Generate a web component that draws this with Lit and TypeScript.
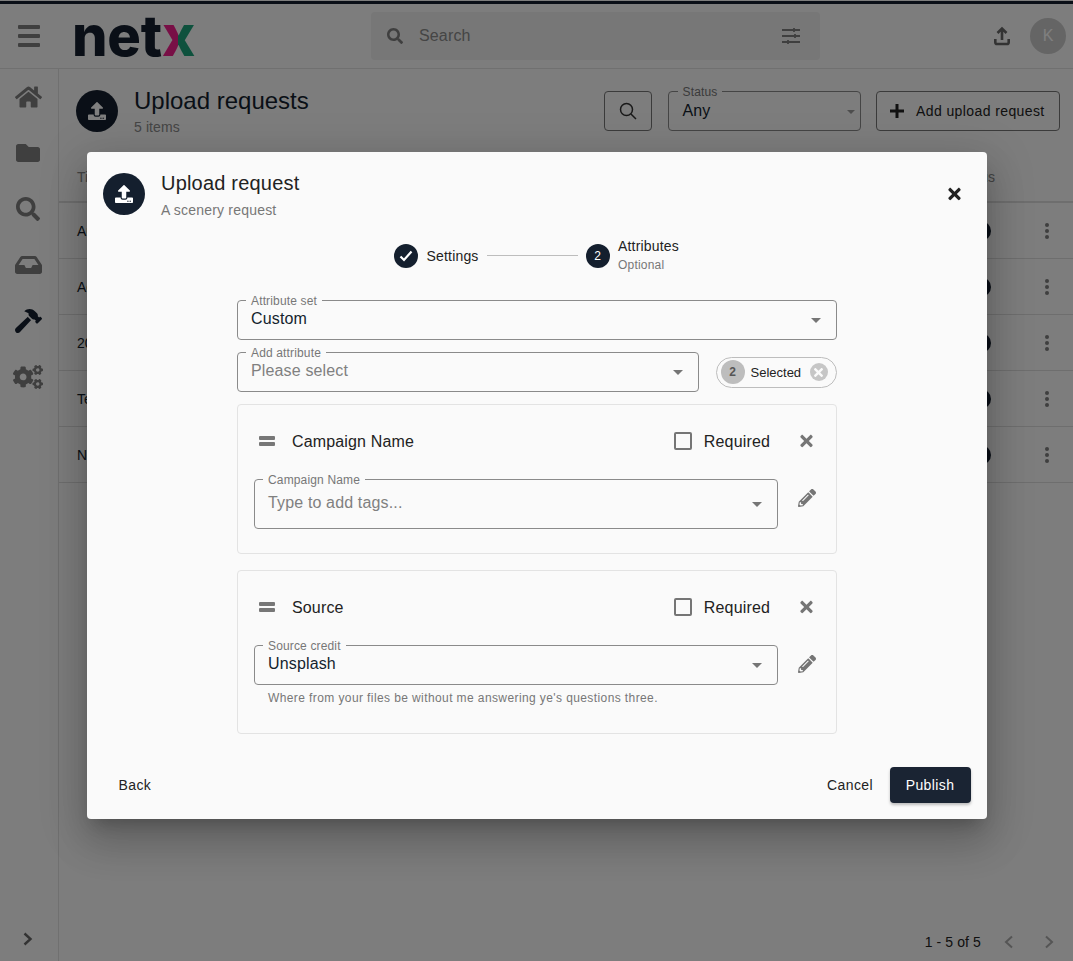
import { LitElement, html, css, svg } from 'lit';
import { customElement } from 'lit/decorators.js';

const UPLOAD = svg`<path d="M296 384h-80c-13.3 0-24-10.7-24-24V192h-87.7c-17.8 0-26.7-21.5-14.1-34.1L242.3 5.7c7.5-7.5 19.8-7.5 27.3 0l152.2 152.2c12.6 12.6 3.7 34.1-14.1 34.1H320v168c0 13.3-10.7 24-24 24zm216-8v112c0 13.3-10.7 24-24 24H24c-13.3 0-24-10.7-24-24V376c0-13.3 10.7-24 24-24h136v8c0 30.9 25.1 56 56 56h80c30.9 0 56-25.1 56-56v-8h136c13.3 0 24 10.7 24 24zm-124 88c0-11-9-20-20-20s-20 9-20 20 9 20 20 20 20-9 20-20zm64 0c0-11-9-20-20-20s-20 9-20 20 9 20 20 20 20-9 20-20z"/>`;
const TIMES = svg`<path d="M242.72 256l100.07-100.07c12.28-12.28 12.28-32.19 0-44.48l-22.24-22.24c-12.28-12.28-32.19-12.28-44.48 0L176 189.28 75.93 89.21c-12.28-12.28-32.19-12.28-44.48 0L9.21 111.45c-12.28 12.28-12.28 32.19 0 44.48L109.28 256 9.21 356.07c-12.28 12.28-12.28 32.19 0 44.48l22.24 22.24c12.28 12.28 32.2 12.28 44.48 0L176 322.72l100.07 100.07c12.28 12.28 32.2 12.28 44.48 0l22.24-22.24c12.28-12.28 12.28-32.19 0-44.48L242.72 256z"/>`;
const PENCIL = svg`<path d="M497.9 142.1l-46.1 46.1c-4.7 4.7-12.3 4.7-17 0l-111-111c-4.7-4.7-4.7-12.3 0-17l46.1-46.1c18.7-18.7 49.1-18.7 67.9 0l60.1 60.1c18.8 18.7 18.8 49.1 0 67.9zM284.2 99.8L21.6 362.4.4 483.9c-2.9 16.4 11.4 30.6 27.8 27.8l121.5-21.3 262.6-262.6c4.7-4.7 4.7-12.3 0-17l-111-111c-4.8-4.7-12.4-4.7-17.1 0zM124.1 339.9c-5.5-5.5-5.5-14.3 0-19.8l154-154c5.5-5.5 14.3-5.5 19.8 0s5.5 14.3 0 19.8l-154 154c-5.5 5.5-14.3 5.5-19.8 0zM88 424h48v36.3l-64.5 11.3-31.1-31.1L51.7 376H88v48z"/>`;
const SEARCH = svg`<path d="M505 442.7L405.3 343c-4.5-4.5-10.6-7-17-7H372c27.6-35.3 44-79.7 44-128C416 93.1 322.9 0 208 0S0 93.1 0 208s93.1 208 208 208c48.3 0 92.7-16.4 128-44v16.3c0 6.4 2.5 12.5 7 17l99.7 99.7c9.4 9.4 24.6 9.4 33.9 0l28.3-28.3c9.4-9.4 9.4-24.6.1-34zM208 336c-70.7 0-128-57.2-128-128 0-70.7 57.2-128 128-128 70.7 0 128 57.2 128 128 0 70.7-57.2 128-128 128z"/>`;

const NAV = [
  { vb: '0 0 576 512', active: false, d: 'M280.37 148.26L96 300.11V464a16 16 0 0 0 16 16l112.06-.29a16 16 0 0 0 15.92-16V368a16 16 0 0 1 16-16h64a16 16 0 0 1 16 16v95.64a16 16 0 0 0 16 16.05L464 480a16 16 0 0 0 16-16V300L295.67 148.26a12.19 12.19 0 0 0-15.3 0zM571.6 251.47L488 182.56V44.05a12 12 0 0 0-12-12h-56a12 12 0 0 0-12 12v72.61L318.47 43a48 48 0 0 0-61 0L4.34 251.47a12 12 0 0 0-1.6 16.9l25.5 31A12 12 0 0 0 45.15 301l235.22-193.74a12.19 12.19 0 0 1 15.3 0L530.9 301a12 12 0 0 0 16.9-1.6l25.5-31a12 12 0 0 0-1.7-16.93z' },
  { vb: '0 0 512 512', active: false, d: 'M464 128H272l-64-64H48C21.49 64 0 85.49 0 112v288c0 26.51 21.49 48 48 48h416c26.51 0 48-21.49 48-48V176c0-26.51-21.49-48-48-48z' },
  { vb: '0 0 512 512', active: false, d: 'M505 442.7L405.3 343c-4.5-4.5-10.6-7-17-7H372c27.6-35.3 44-79.7 44-128C416 93.1 322.9 0 208 0S0 93.1 0 208s93.1 208 208 208c48.3 0 92.7-16.4 128-44v16.3c0 6.4 2.5 12.5 7 17l99.7 99.7c9.4 9.4 24.6 9.4 33.9 0l28.3-28.3c9.4-9.4 9.4-24.6.1-34zM208 336c-70.7 0-128-57.2-128-128 0-70.7 57.2-128 128-128 70.7 0 128 57.2 128 128 0 70.7-57.2 128-128 128z' },
  { vb: '0 0 576 512', active: false, d: 'M567.938 243.908L462.25 85.374A48.003 48.003 0 0 0 422.311 64H153.689a48 48 0 0 0-39.938 21.374L8.062 243.908A47.994 47.994 0 0 0 0 270.533V400c0 26.51 21.49 48 48 48h480c26.51 0 48-21.49 48-48V270.533a47.994 47.994 0 0 0-8.062-26.625zM162.252 128h251.497l85.333 128H376l-32 64H232l-32-64H76.918l85.334-128z' },
  { vb: '0 0 576 512', active: true, d: 'M571.31 193.94l-22.63-22.63c-6.25-6.25-16.38-6.25-22.63 0l-11.31 11.31-28.9-28.9c5.63-21.31.36-44.9-16.35-61.61l-45.25-45.25c-62.48-62.48-163.79-62.48-226.28 0l90.51 45.25v18.75c0 16.97 6.74 33.25 18.75 45.25l49.14 49.14c16.71 16.71 40.3 21.98 61.61 16.35l28.9 28.9-11.31 11.31c-6.25 6.25-6.25 16.38 0 22.63l22.63 22.63c6.25 6.25 16.38 6.25 22.63 0l90.51-90.51c6.23-6.24 6.23-16.37-.02-22.62zm-286.72-15.2c-3.7-3.7-6.84-7.79-9.85-11.95L19.64 404.96c-25.57 23.88-26.26 64.19-1.53 88.93s65.05 24.05 88.93-1.53l238.13-255.07c-3.96-2.91-7.9-5.87-11.44-9.41l-49.14-49.14z' },
  { vb: '0 0 640 512', active: false, d: 'M512.1 191l-8.2 14.3c-3 5.3-9.4 7.5-15.1 5.4-11.8-4.4-22.6-10.7-32.1-18.6-4.6-3.8-5.8-10.5-2.8-15.7l8.2-14.3c-6.9-8-12.3-17.3-15.9-27.4h-16.5c-6 0-11.2-4.3-12.2-10.3-2-12-2.1-24.6 0-37.1 1-6 6.2-10.4 12.2-10.4h16.5c3.6-10.1 9-19.4 15.9-27.4l-8.2-14.3c-3-5.2-1.9-11.9 2.8-15.7 9.5-7.9 20.4-14.2 32.1-18.6 5.7-2.1 12.1.1 15.1 5.4l8.2 14.3c10.5-1.9 21.2-1.9 31.7 0L552 6.3c3-5.3 9.4-7.5 15.1-5.4 11.8 4.4 22.6 10.7 32.1 18.6 4.6 3.8 5.8 10.5 2.8 15.7l-8.2 14.3c6.9 8 12.3 17.3 15.9 27.4h16.5c6 0 11.2 4.3 12.2 10.3 2 12 2.1 24.6 0 37.1-1 6-6.2 10.4-12.2 10.4h-16.5c-3.6 10.1-9 19.4-15.9 27.4l8.2 14.3c3 5.2 1.9 11.9-2.8 15.7-9.5 7.9-20.4 14.2-32.1 18.6-5.7 2.1-12.1-.1-15.1-5.4l-8.2-14.3c-10.4 1.9-21.2 1.9-31.7 0zm-10.5-58.8c38.5 29.6 82.4-14.3 52.8-52.8-38.5-29.7-82.4 14.3-52.8 52.8zM386.3 286.1l33.7 16.8c10.1 5.8 14.5 18.1 10.5 29.1-8.9 24.2-26.4 46.4-42.6 65.8-7.4 8.9-20.2 11.1-30.3 5.3l-29.1-16.8c-16 13.7-34.6 24.6-54.9 31.7v33.6c0 11.6-8.3 21.6-19.7 23.6-24.6 4.2-50.4 4.4-75.9 0-11.5-2-20-11.9-20-23.6V418c-20.3-7.2-38.9-18-54.9-31.7L74 403c-10 5.8-22.9 3.6-30.3-5.3-16.2-19.4-33.3-41.6-42.2-65.7-4-10.9.4-23.2 10.5-29.1l33.3-16.8c-3.9-20.9-3.9-42.4 0-63.4L12 205.8c-10.1-5.8-14.6-18.1-10.5-29 8.9-24.2 26-46.4 42.2-65.8 7.4-8.9 20.2-11.1 30.3-5.3l29.1 16.8c16-13.7 34.6-24.6 54.9-31.7V57.1c0-11.5 8.2-21.5 19.6-23.5 24.6-4.2 50.5-4.4 76-.1 11.5 2 20 11.9 20 23.6v33.6c20.3 7.2 38.9 18 54.9 31.7l29.1-16.8c10-5.8 22.9-3.6 30.3 5.3 16.2 19.4 33.2 41.6 42.1 65.8 4 10.9.1 23.2-10 29.1l-33.7 16.8c3.9 21 3.9 42.5 0 63.5zm-117.6 21.1c59.2-77-28.7-164.9-105.7-105.7-59.2 77 28.7 164.9 105.7 105.7zm243.4 182.7l-8.2 14.3c-3 5.3-9.4 7.5-15.1 5.4-11.8-4.4-22.6-10.7-32.1-18.6-4.6-3.8-5.8-10.5-2.8-15.7l8.2-14.3c-6.9-8-12.3-17.3-15.9-27.4h-16.5c-6 0-11.2-4.3-12.2-10.3-2-12-2.1-24.6 0-37.1 1-6 6.2-10.4 12.2-10.4h16.5c3.6-10.1 9-19.4 15.9-27.4l-8.2-14.3c-3-5.2-1.9-11.9 2.8-15.7 9.5-7.9 20.4-14.2 32.1-18.6 5.7-2.1 12.1.1 15.1 5.4l8.2 14.3c10.5-1.9 21.2-1.9 31.7 0l8.2-14.3c3-5.3 9.4-7.5 15.1-5.4 11.8 4.4 22.6 10.7 32.1 18.6 4.6 3.8 5.8 10.5 2.8 15.7l-8.2 14.3c6.9 8 12.3 17.3 15.9 27.4h16.5c6 0 11.2 4.3 12.2 10.3 2 12 2.1 24.6 0 37.1-1 6-6.2 10.4-12.2 10.4h-16.5c-3.6 10.1-9 19.4-15.9 27.4l8.2 14.3c3 5.2 1.9 11.9-2.8 15.7-9.5 7.9-20.4 14.2-32.1 18.6-5.7 2.1-12.1-.1-15.1-5.4l-8.2-14.3c-10.4 1.9-21.2 1.9-31.7 0zM501.6 431c38.5 29.6 82.4-14.3 52.8-52.8-38.5-29.6-82.4 14.3-52.8 52.8z' },
];

const ROWS = ['Autumn', 'Aerial', '2022', 'Team', 'New'];

@customElement('app-root')
export class AppRoot extends LitElement {
  static styles = css`
    :host {
      display: block;
      position: relative;
      height: 961px;
      overflow: hidden;
      background: #fafafa;
      font-family: "Liberation Sans", Arial, sans-serif;
      color: #141f2e;
      padding-top: 1px;
      box-sizing: border-box;
    }
    svg { display: block; fill: currentColor; }

    .topline { height: 3px; background: #141f2e; }
    .topbar {
      height: 64px;
      display: flex;
      align-items: center;
      border-bottom: 1px solid #e0e0e0;
      position: relative;
    }
    .burger { width: 22px; margin-left: 18px; display: flex; flex-direction: column; gap: 5px; color: #7e7e7e; }
    .burger i { display: block; height: 4px; background: currentColor; border-radius: 1px; }
    .logo {
      margin-left: 32px;
      width: 123px;
      font-family: Inter, "Liberation Sans", sans-serif;
      font-size: 56px;
      font-weight: 800;
      line-height: 50px;
      letter-spacing: -0.2px;
      white-space: nowrap;
      margin-top: 0;
      flex: none;
    }
    .logo b {
      font-weight: 800;
      background: linear-gradient(90deg, #f01f8c 0 50%, #1ca37a 50%);
      -webkit-background-clip: text;
      background-clip: text;
      color: transparent;
    }
    .search {
      margin-left: 176px;
      width: 449px;
      height: 48px;
      margin-top: -1px;
      background: #eeeeee;
      border-radius: 4px;
      display: flex;
      align-items: center;
      color: #7e7e7e;
      font-size: 16px;
      padding: 0 19px 0 16px;
      box-sizing: border-box;
      flex: none;
    }
    .search span { margin-left: 16px; flex: 1; color: #8a8a8a; letter-spacing: .15px; }
    .top-right { margin-left: auto; display: flex; align-items: center; margin-right: 7px; gap: 20px; }
    .upload-top { color: #666; }
    .avatar-k {
      width: 36px;
      height: 36px;
      border-radius: 50%;
      background: #cacaca;
      color: #fff;
      display: flex;
      align-items: center;
      justify-content: center;
      font-size: 16px;
    }

    .body { display: flex; height: 893px; }
    .side {
      width: 59px;
      border-right: 1px solid #e0e0e0;
      display: flex;
      flex-direction: column;
      padding-right: 2px;
      flex: none;
      box-sizing: border-box;
      color: #7e7e7e;
    }
    .nav { height: 56px; display: flex; align-items: center; justify-content: center; }
    .nav.on { color: #141f2e; }
    .expand { margin-top: auto; height: 30px; display: flex; align-items: flex-start; justify-content: center; color: #666; }

    .main { flex: 1; display: flex; flex-direction: column; min-width: 0; }
    .page-head { height: 83px; display: flex; align-items: center; padding: 0 13px 0 17px; }
    .round {
      border-radius: 50%;
      background: #141f2e;
      color: #fff;
      display: flex;
      align-items: center;
      justify-content: center;
      flex: none;
    }
    .round.big { width: 42px; height: 42px; }
    .page-title { margin-left: 16px; }
    .page-title h1 { margin: 0; font-size: 24px; font-weight: 400; line-height: 28px; }
    .page-title p { margin: 4px 0 0; font-size: 14px; line-height: 16px; color: #8a8a8a; letter-spacing: .1px; }
    .page-tools { margin-left: auto; display: flex; align-items: center; }
    .tool {
      border: 1px solid #777;
      border-radius: 4px;
      height: 40px;
      box-sizing: border-box;
      display: flex;
      align-items: center;
    }
    .tool.icon { width: 48px; justify-content: center; color: #333; }
    .tool.add { width: 184px; margin-left: 15px; padding-left: 13px; font-size: 14px; letter-spacing: .4px; gap: 12px; color: #222; }
    .status { width: 193px; margin-left: 16px; }
    .status .field { padding-bottom: 0; padding-top: 1px; }
    .status .field .arrow { right: 5px; top: 18px; border-width: 4px; border-bottom-width: 0; border-top-color: #9a9a9a; }

    .thead { height: 51px; display: flex; align-items: center; justify-content: space-between; padding: 0 78px 0 18px; font-size: 14px; color: #888; border-bottom: 2px solid #dcdcdc; box-sizing: border-box; }
    .row { height: 56px; display: flex; align-items: center; padding: 0 14px 0 18px; font-size: 14px; border-bottom: 1px solid #dcdcdc; box-sizing: border-box; }
    .row .dot { margin-left: auto; width: 20px; height: 20px; border-radius: 50%; background: #141f2e; margin-right: 44px; }
    .kebab { display: flex; flex-direction: column; gap: 2px; width: 24px; align-items: center; color: #7e7e7e; }
    .kebab i { width: 4px; height: 4px; border-radius: 50%; background: currentColor; }
    .pager { margin-top: auto; height: 38px; display: flex; align-items: center; justify-content: flex-end; font-size: 14px; padding: 0 18px 3px 0; box-sizing: border-box; color: #222; letter-spacing: .1px; }
    .pager svg { color: #aaa; margin-left: 28px; }
    .pager svg:first-of-type { margin-left: 22px; }

    .overlay {
      position: absolute;
      inset: 0;
      background: rgba(0, 0, 0, .5);
      display: flex;
      justify-content: center;
      padding-top: 152px;
      box-sizing: border-box;
    }
    .modal {
      width: 900px;
      height: 667px;
      background: #fafafa;
      border-radius: 4px;
      box-shadow: 0 11px 15px -7px rgba(0,0,0,.2), 0 24px 38px 3px rgba(0,0,0,.14), 0 9px 46px 8px rgba(0,0,0,.12);
      display: flex;
      flex-direction: column;
      padding: 21px 16px 16px;
      box-sizing: border-box;
      position: relative;
    }
    .m-head { display: flex; align-items: flex-start; height: 42px; }
    .m-title { margin-left: 16.5px; flex: 1; }
    .m-title h2 { margin: 0; font-size: 20px; font-weight: 400; line-height: 20px; color: #222; letter-spacing: .2px; }
    .m-title p { margin: 9px 0 0; font-size: 14px; line-height: 16px; color: #777; letter-spacing: .2px; }
    .m-close { width: 20px; margin-right: 6.5px; margin-top: 12px; height: 14px; display: flex; justify-content: center; color: #222; }

    .stepper { display: flex; align-items: center; justify-content: center; height: 34px; margin-top: 23px; }
    .step-n { width: 24px; height: 24px; font-size: 12px; margin-top: 1px; }
    .step-label { margin-left: 8.5px; font-size: 14px; color: #222; letter-spacing: .17px; padding-top: 1px; }
    .step-label small { display: block; font-size: 12px; color: #777; margin-top: 4px; line-height: 14px; letter-spacing: .2px; }
    .step-label.two { line-height: 16px; padding-top: 0; }
    .step-line { width: 91px; height: 1px; background: #bdbdbd; margin: 0 8px; }

    .form { width: 600px; margin: 28px auto 0; display: flex; flex-direction: column; gap: 12px; }
    .field {
      position: relative;
      border: 1px solid #8a8a8a;
      border-radius: 4px;
      height: 40px;
      box-sizing: border-box;
      display: flex;
      align-items: center;
      padding: 0 13px 3px 13.5px;
      font-size: 16px;
      letter-spacing: .15px;
      color: #141f2e;
    }
    .field label {
      position: absolute;
      top: -7px;
      left: 8.5px;
      padding: 0 5px;
      background: #fafafa;
      font-size: 12px;
      line-height: 14px;
      color: #777;
      white-space: nowrap;
      letter-spacing: .15px;
    }
    .field.empty { color: #808080; }
    .field.tall { height: 50px; }
    .field .arrow {
      position: absolute;
      right: 15px;
      top: 17px;
      width: 0;
      height: 0;
      border: 5px solid transparent;
      border-top-color: #757575;
      border-bottom-width: 0;
    }
    .field.tall .arrow { top: 22px; }
    .attr-row { display: flex; align-items: center; justify-content: space-between; }
    .attr-row .field { width: 462px; }
    .chip {
      width: 121px;
      height: 31px;
      border: 1px solid #bdbdbd;
      border-radius: 16px;
      box-sizing: border-box;
      display: flex;
      align-items: center;
      padding: 0 3px 0 4px;
      font-size: 13px;
      color: #222;
    }
    .chip-n { width: 24px; height: 24px; border-radius: 50%; background: #bdbdbd; color: #555; font-size: 12px; display: flex; align-items: center; justify-content: center; font-weight: 700; margin-right: 6px; }
    .chip-x { margin-left: auto; margin-right: 5px; width: 18px; height: 18px; border-radius: 50%; background: #c6c6c6; color: #fafafa; display: flex; align-items: center; justify-content: center; }

    .card { border: 1px solid #e3e3e3; border-radius: 4px; padding: 18px 16px 24px; }
    .cards { display: flex; flex-direction: column; gap: 16px; }
    .card-row { height: 36px; display: flex; align-items: center; font-size: 16px; color: #222; margin-bottom: 20px; letter-spacing: .15px; }
    .drag { width: 16px; margin-left: 5px; margin-right: 17.5px; display: flex; flex-direction: column; gap: 2px; color: #777; }
    .drag i { height: 4px; background: currentColor; border-radius: 1px; }
    .card-name { flex: 1; padding-top: 1px; }
    .box { width: 14px; height: 14px; border: 2px solid #757575; border-radius: 2px; margin-right: 11.5px; }
    .req { margin-right: 29.5px; padding-top: 1px; }
    .x, .pen { width: 14px; margin-right: 6px; color: #757575; display: flex; justify-content: center; flex: none; }
    .card-body { display: flex; align-items: flex-start; }
    .card-body .col { flex: 1; min-width: 0; }
    .pen { margin-left: 20px; width: 18px; margin-right: 4px; margin-top: 10px; }
    .help { margin: 6px 14px 0 14.5px; font-size: 12px; line-height: 14px; color: #777; letter-spacing: .4px; height: 18px; }

    .foot { margin-top: auto; display: flex; align-items: center; font-size: 14px; color: #222; letter-spacing: .4px; }
    .back { margin-left: 16px; flex: 1; }
    .cancel { margin-right: 16.5px; }
    .publish {
      width: 81px;
      height: 36px;
      background: #1a2433;
      color: #fff;
      border-radius: 4px;
      display: flex;
      align-items: center;
      justify-content: center;
      box-shadow: 0 2px 3px rgba(0,0,0,.25);
    }
  `;

  private field(label: string, value: string, empty = false, tall = false) {
    return html`<div class="field ${empty ? 'empty' : ''} ${tall ? 'tall' : ''}">
      <label>${label}</label>${value}<span class="arrow"></span>
    </div>`;
  }

  private card(name: string, field: unknown, help = '') {
    return html`<div class="card">
      <div class="card-row">
        <div class="drag"><i></i><i></i></div>
        <div class="card-name">${name}</div>
        <div class="box"></div>
        <div class="req">Required</div>
        <div class="x"><svg width="13" height="18" viewBox="0 0 352 512">${TIMES}</svg></div>
      </div>
      <div class="card-body">
        <div class="col">${field}${help ? html`<div class="help">${help}</div>` : ''}</div>
        <div class="pen"><svg width="18" height="18" viewBox="0 0 512 512">${PENCIL}</svg></div>
      </div>
    </div>`;
  }

  render() {
    return html`
      <div class="topline"></div>
      <header class="topbar">
        <div class="burger"><i></i><i></i><i></i></div>
        <div class="logo">net<b>x</b></div>
        <div class="search">
          <svg width="16" height="16" viewBox="0 0 512 512">${SEARCH}</svg>
          <span>Search</span>
          <svg width="20" height="20" viewBox="0 0 20 20" fill="none" stroke="currentColor" stroke-width="1.8" style="fill:none">
            <path d="M1 4h18M1 10h18M1 16h18M13 2v4M7 14v4M14 8v4"/>
          </svg>
        </div>
        <div class="top-right">
          <svg class="upload-top" width="16" height="20" viewBox="0 0 16 20" style="fill:none" stroke="currentColor" stroke-width="2.6">
            <path d="M8 14V3M3.5 7 8 2.5 12.5 7M1.3 13v3.2a1.8 1.8 0 0 0 1.8 1.8h9.8a1.8 1.8 0 0 0 1.8-1.8V13"/>
          </svg>
          <div class="avatar-k">K</div>
        </div>
      </header>
      <div class="body">
        <nav class="side">
          ${NAV.map(n => html`<div class="nav ${n.active ? 'on' : ''}">
            <svg height="24" viewBox=${n.vb}><path d=${n.d}/></svg>
          </div>`)}
          <div class="expand">
            <svg width="12" height="14" viewBox="0 0 12 14" style="fill:none" stroke="currentColor" stroke-width="2.4"><path d="M2.5 1.5 8.5 7l-6 5.5"/></svg>
          </div>
        </nav>
        <main class="main">
          <div class="page-head">
            <div class="round big"><svg width="18" height="18" viewBox="0 0 512 512">${UPLOAD}</svg></div>
            <div class="page-title"><h1>Upload requests</h1><p>5 items</p></div>
            <div class="page-tools">
              <div class="tool icon">
                <svg width="18" height="18" viewBox="0 0 18 18" style="fill:none" stroke="currentColor" stroke-width="1.5"><circle cx="7.5" cy="7.5" r="6"/><path d="m12 12 5 5"/></svg>
              </div>
              <div class="status">${this.field('Status', 'Any')}</div>
              <div class="tool add">
                <svg width="14" height="14" viewBox="0 0 14 14"><path d="M5.5 0h3v5.5H14v3H8.5V14h-3V8.5H0v-3h5.5z"/></svg>
                Add upload request
              </div>
            </div>
          </div>
          <div class="thead"><span>Title</span><span>Status</span></div>
          ${ROWS.map(r => html`<div class="row"><span>${r}</span><i class="dot"></i><div class="kebab"><i></i><i></i><i></i></div></div>`)}
          <div class="pager">
            1 - 5 of 5
            <svg width="12" height="14" viewBox="0 0 12 14" style="fill:none" stroke="currentColor" stroke-width="2"><path d="M9 1.5 3 7l6 5.5"/></svg>
            <svg width="12" height="14" viewBox="0 0 12 14" style="fill:none" stroke="currentColor" stroke-width="2"><path d="M3 1.5 9 7l-6 5.5"/></svg>
          </div>
        </main>
      </div>

      <div class="overlay">
        <section class="modal">
          <div class="m-head">
            <div class="round big"><svg width="18" height="18" viewBox="0 0 512 512">${UPLOAD}</svg></div>
            <div class="m-title"><h2>Upload request</h2><p>A scenery request</p></div>
            <div class="m-close"><svg width="13" height="18" viewBox="0 0 352 512">${TIMES}</svg></div>
          </div>
          <div class="stepper">
            <div class="round step-n"><svg width="14" height="12" viewBox="0 0 14 12" style="fill:none" stroke="currentColor" stroke-width="2.2"><path d="m1.5 6.5 3.5 3.5 7.5-8.5"/></svg></div>
            <div class="step-label">Settings</div>
            <div class="step-line"></div>
            <div class="round step-n">2</div>
            <div class="step-label two">Attributes<small>Optional</small></div>
          </div>
          <div class="form">
            ${this.field('Attribute set', 'Custom')}
            <div class="attr-row">
              ${this.field('Add attribute', 'Please select', true)}
              <div class="chip">
                <span class="chip-n">2</span>Selected
                <span class="chip-x"><svg width="9" height="13" viewBox="0 0 352 512">${TIMES}</svg></span>
              </div>
            </div>
            <div class="cards">
              ${this.card('Campaign Name', this.field('Campaign Name', 'Type to add tags...', true, true))}
              ${this.card('Source', this.field('Source credit', 'Unsplash'), "Where from your files be without me answering ye's questions three.")}
            </div>
          </div>
          <div class="foot">
            <div class="back">Back</div>
            <div class="cancel">Cancel</div>
            <div class="publish">Publish</div>
          </div>
        </section>
      </div>
    `;
  }
}
